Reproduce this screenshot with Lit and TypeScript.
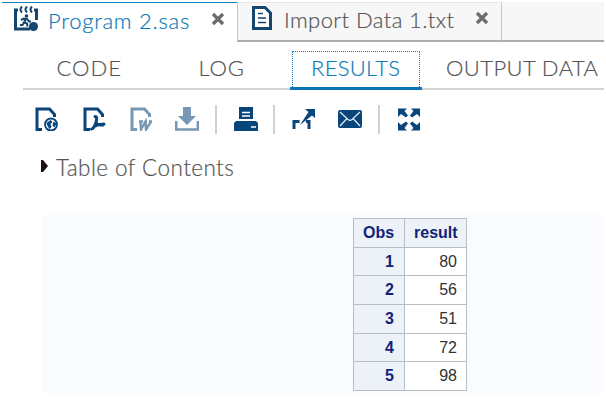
import { LitElement, html, css, svg } from "lit";
import { customElement } from "lit/decorators.js";

const page = svg`<path d="M20.500 10V7.500L15.500 2H3V22.500H8" fill="none" stroke="currentColor" stroke-width="3"/>`;

const icons = {
  html: svg`${page}<circle cx="17" cy="17.500" r="6" fill="#fff" stroke="currentColor" stroke-width="1.800"/><path d="M12.500 16l4-3 2 2-2 2 1 3-2 2-2-3zM19.500 14.500l3 2-2 4-2-2z" fill="currentColor"/>`,
  pdf: svg`${page}<path d="M13 9.500c3 0 1 5 1 6s4 3 7 2.500M14 15c-1 4-3 7-4.500 7M12 19.500c3-1.500 5-2.500 10-2.500" fill="none" stroke="currentColor" stroke-width="3" stroke-linecap="round"/>`,
  word: svg`${page}<path d="M10 14.500h4M11.500 14.500l.5 8 4.500-8 .5 8 5-8M16 14.500h2M20 14.500h3" fill="none" stroke="currentColor" stroke-width="2.400"/>`,
  download: svg`<path d="M8 0h8v9h5l-9 9-9-9h5z" fill="currentColor"/><path d="M1.200 14v8.500h21.600V14" fill="none" stroke="currentColor" stroke-width="2.500"/>`,
  print: svg`<path d="M5 0h14v12H5z" fill="currentColor"/><path d="M8 5.500h8M8 9h8" stroke="#fff" stroke-width="1.300"/><path d="M2 14h20l2 2v8H0v-8z" fill="currentColor"/><path d="M17 20h5" stroke="#fff" stroke-width="1.500"/>`,
  open: svg`<path d="M13 2h10v9l-3-2.500L8 18l8.500-13z" fill="currentColor"/><path d="M2 22v-7.500H7.500M14 14.500h3V22" fill="none" stroke="currentColor" stroke-width="3"/>`,
  mail: svg`<rect x="0" y="3" width="24" height="18" rx="2" fill="currentColor"/><path d="M2 5l8 7.500q2 1.500 4 0l8-7.500M2 19l7-7.500M22 19l-7-7.500" fill="none" stroke="#dfe7ee" stroke-width="1.300"/>`,
  expand: svg`<path d="M1 1.500h9L7.500 4l3.500 4.500-2 2L4 7l-3 3zM23 1.500h-9L16.500 4 13 8.500l2 2L20 7l3 3zM1 23.500h9L7.500 21l3.500-4.500-2-2L4 18l-3-3zM23 23.500h-9l2.500-2.500-3.500-4.500 2-2L20 18l3-3z" fill="currentColor"/>`,
};

const icon = (name: keyof typeof icons, cls = "") =>
  html`<svg class="icon ${name} ${cls}" viewBox="0 0 24 24">${icons[name]}</svg>`;

const close = html`<svg class="close" viewBox="0 0 14 14"><path d="M2 2l10 10M12 2L2 12" stroke="#6b6b6b" stroke-width="3.200"/></svg>`;

@customElement("app-root")
export class AppRoot extends LitElement {
  static styles = css`
    :host { display: block; width: 606px; height: 414px; overflow: hidden; background: #fff; font-family: Lato, sans-serif; font-weight: 300; color: #555; }
    * { box-sizing: border-box; }
    svg { display: block; flex: none; }
    span { white-space: nowrap; -webkit-text-stroke: 0.2px currentColor; }
    .files { display: flex; margin: 2px 2px 0; height: 40px; }
    .file { display: flex; align-items: center; height: 40px; }
    .file.active { width: 235px; border-top: 1px solid #0f7fbd; color: #0f7ab9; padding-left: 12px; font-size: 22px; }
    .file.other { width: 265px; background: #f7f7f7; border: 1px solid #c6c6c6; border-width: 0 1px 2px; border-top: 1px solid #e6e6e6; border-bottom-color: #adadad; padding-left: 14px; font-size: 22px; }
    .rest { flex: 1; background: #f7f7f7; border-bottom: 2px solid #adadad; }
    .program { width: 25px; height: 25px; margin: -8px 9px 0 0; }
    .text { width: 20px; height: 24px; margin: -8px 12px 0 0; }
    .name { line-height: 26px; margin-top: -3px; }
    .n1 { width: 163px; letter-spacing: 0.76px; }
    .n2 { width: 191px; letter-spacing: 0.42px; }
    .close { width: 14px; height: 14px; margin-top: -7px; }
    .views { display: flex; margin: 9px 2px 0 23px; height: 39px; border-bottom: 2px solid #d2d2d2; font-size: 22px; line-height: 34px; }
    .view { height: 39px; }
    .code { width: 143px; padding-left: 33.500px; letter-spacing: 1px; }
    .log { width: 124px; padding-left: 32.500px; letter-spacing: 0.8px; }
    .results { width: 132px; border-bottom: 3px solid #0872b5; color: #0f7ab9; padding: 0 2px; }
    .results span { display: block; height: 36px; border: 1px dotted #0f7fbd; border-bottom: 0; padding-left: 18px; line-height: 32px; letter-spacing: 0.3px; }
    .output { padding-left: 24px; letter-spacing: 0.42px; }
    .tools { display: flex; align-items: center; height: 50px; margin-left: 34px; margin-top: 4px; color: #08457a; }
    .icon { width: 24px; height: 24px; }
    .pdf { margin-left: 24px; }
    .word { margin-left: 23px; }
    .download { margin-left: 22px; }
    .muted { color: #7797b3; }
    .sep { width: 2px; height: 29px; background: #d2d2d2; }
    .gap-15 { margin-left: 15px; }
    .gap-16 { margin-left: 16px; }
    .gap-17 { margin-left: 17px; }
    .gap-22 { margin-left: 22px; }
    .contents { display: flex; align-items: center; height: 28px; margin: 10px 0 0 41px; font-size: 22.500px; line-height: 28px; letter-spacing: 0.43px; }
    .contents svg { width: 7px; height: 12px; margin: -4px 8px 0 0; }
    .output-page { margin: 33px 2px 0 42px; height: 178px; padding: 3px 0 0 311px; background: #fafbfe; }
    table { border-collapse: collapse; table-layout: fixed; width: 114px; font: 16px/20px "Liberation Sans", Arial, sans-serif; color: #333; }
    th, td { border: 1px solid #b9bec2; height: 28.700px; padding: 0 9px; text-align: right; background: #fff; }
    th { background: #edf2f9; color: #112277; font-weight: 700; }
    th:first-child { padding-right: 10px; }
    .obs { width: 51px; }
  `;

  render() {
    const rows = [80, 56, 51, 72, 98];
    return html`
      <div class="files">
        <div class="file active">
          <svg class="program" viewBox="0 0 25 25"><path d="M4 4H1.500V23H16M20 4h2.500v10" fill="none" stroke="#14466f" stroke-width="3"/><path d="M8 .5q-3 3 0 6M13 .5q-3 3 0 6M18 .5q-3 3 0 6" fill="none" stroke="#14466f" stroke-width="2"/><circle cx="12.500" cy="10" r="1.800" fill="#14466f"/><path d="M7 14l3-1.500 3 .5 2 2.500h2M12 13l-2 3.500 3 1 .5 3M10 16.500L8.500 19H6" fill="none" stroke="#14466f" stroke-width="2"/><circle cx="19.500" cy="20.500" r="4.500" fill="#14466f"/></svg>
          <span class="name n1">Program 2.sas</span>${close}
        </div>
        <div class="file other">
          <svg class="text" viewBox="0 0 20 24"><path d="M1.500 1.500H13L18.500 7v15.500h-17z" fill="#fff" stroke="#14466f" stroke-width="3"/><path d="M6 7.500h5M6 12h8M6 16.500h8" stroke="#14466f" stroke-width="1.500"/></svg>
          <span class="name n2">Import Data 1.txt</span>${close}
        </div>
        <div class="rest"></div>
      </div>
      <div class="views">
        <span class="view code">CODE</span><span class="view log">LOG</span>
        <div class="view results"><span>RESULTS</span></div>
        <span class="view output">OUTPUT DATA</span>
      </div>
      <div class="tools">
        ${icon("html")}${icon("pdf")}${icon("word", "muted")}${icon("download", "muted")}
        <div class="sep gap-16"></div>
        <div class="gap-17">${icon("print")}</div>
        <div class="sep gap-15"></div>
        <div class="gap-17">${icon("open")}</div>
        <div class="gap-22">${icon("mail")}</div>
        <div class="sep gap-16"></div>
        <div class="gap-17">${icon("expand")}</div>
      </div>
      <div class="contents"><svg viewBox="0 0 7 12"><path d="M0 0h2l5 6-5 6H0z" fill="#1b1013"/></svg><span>Table of Contents</span></div>
      <div class="output-page">
        <table>
          <tr><th class="obs">Obs</th><th>result</th></tr>
          ${rows.map((v, i) => html`<tr><th>${i + 1}</th><td>${v}</td></tr>`)}
        </table>
      </div>
    `;
  }
}
